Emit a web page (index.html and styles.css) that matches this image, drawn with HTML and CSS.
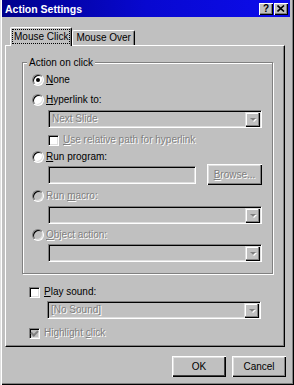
FILE: index.html
```html
<!DOCTYPE html>
<html lang="en">
<head>
    <meta charset="UTF-8">
    <title>Action Settings</title>
    <link rel="stylesheet" href="styles.css">
</head>
<body>

    <div class="window">
        <div class="titlebar">
            <span class="title">Action Settings</span>
            <div class="caption-btns">
                <span class="cbtn">?</span>
                <span class="cbtn">
                    <svg width="8" height="7" viewBox="0 0 8 7"><path d="M0.5 0.5 L7 6.5 M7 0.5 L0.5 6.5" stroke="#000" stroke-width="1.6"/></svg>
                </span>
            </div>
        </div>

        <div class="content">
            <div class="tabs">
                <div class="tab active"><span class="focus">Mouse Click</span></div>
                <div class="tab">Mouse Over</div>
            </div>

            <div class="panel">
                <div class="group">
                    <div class="legend">Action on click</div>

                    <div class="row r-none"><span class="radio checked"></span><span><u>N</u>one</span></div>
                    <div class="row r-gap4"><span class="radio"></span><span><u>H</u>yperlink to:</span></div>
                    <div class="field select sel-1 indent"><span class="val dis">Next Slide</span><span class="arrow"></span></div>
                    <div class="row r-check indent"><span class="check"></span><span class="dis"><u>U</u>se relative path for hyperlink</span></div>
                    <div class="row r-gap1"><span class="radio"></span><span><u>R</u>un program:</span></div>
                    <div class="input-row indent">
                        <div class="field text-input"></div>
                        <div class="btn browse dis"><span><u>B</u>rowse...</span></div>
                    </div>
                    <div class="row r-gap3"><span class="radio off"></span><span class="dis">Run <u>m</u>acro:</span></div>
                    <div class="field select sel-2 indent"><span class="val"></span><span class="arrow"></span></div>
                    <div class="row r-gap3"><span class="radio off"></span><span class="dis"><u>O</u>bject action:</span></div>
                    <div class="field select sel-3 indent"><span class="val"></span><span class="arrow"></span></div>
                </div>

                <div class="row r-sound"><span class="check"></span><span><u>P</u>lay sound:</span></div>
                <div class="field select sel-sound"><span class="val dis">[No Sound]</span><span class="arrow"></span></div>
                <div class="row r-highlight"><span class="check checked off"></span><span class="dis">Highlight <u>c</u>lick</span></div>
            </div>

            <div class="buttons">
                <div class="btn ok">OK</div>
                <div class="btn">Cancel</div>
            </div>
        </div>
    </div>

</body>
</html>
```

FILE: styles.css
```css
* {
    margin: 0;
    padding: 0;
    box-sizing: border-box;
}

body {
    background: #c0c0c0;
    font-family: "Liberation Sans", Arial, sans-serif;
    font-size: 10px;
    color: #000;
}

.window {
    width: 294px;
    height: 385px;
    padding: 0 4px 0 2px;
    background: #c0c0c0;
    box-shadow: inset 1px 0 #dfdfdf, inset 2px 0 #fff, inset -1px -1px #000, inset -2px -2px #808080;
}

/* title bar */
.titlebar {
    height: 17px;
    display: flex;
    align-items: center;
    justify-content: space-between;
    padding: 0 2px 0 3px;
    background: linear-gradient(to right, #00008c, #0808d0 50%, #0c0cec);
}
.title {
    color: #fff;
    font-weight: bold;
    font-size: 10.5px;
}
.caption-btns {
    display: flex;
    gap: 1px;
}
.cbtn {
    width: 14px;
    height: 12px;
    display: flex;
    align-items: center;
    justify-content: center;
    background: #c0c0c0;
    font-weight: bold;
    font-size: 10px;
    line-height: 1;
    box-shadow: inset 1px 1px #fff, inset -1px -1px #000, inset -2px -2px #808080;
}

.content {
    padding-left: 3px;
}

/* tabs */
.tabs {
    display: flex;
    align-items: flex-end;
    height: 18px;
    margin-top: 10px;
    padding-left: 5px;
}
.tab {
    height: 15px;
    padding: 0 3px;
    line-height: 14px;
    white-space: nowrap;
    border-top: 1px solid #fff;
    border-left: 1px solid #fff;
    border-right: 1px solid #000;
    border-radius: 2px 2px 0 0;
    box-shadow: inset -1px 0 #808080;
}
.tab.active {
    position: relative;
    z-index: 1;
    height: 19px;
    margin-bottom: -1px;
    padding: 2px 2px 0 2px;
    background: #c0c0c0;
}
.focus {
    display: block;
    padding: 0 1px;
    line-height: 13px;
    outline: 1px dotted #000;
}

/* tab page */
.panel {
    width: 280px;
    height: 302px;
    border-top: 1px solid #fff;
    border-left: 1px solid #fff;
    border-right: 1px solid #000;
    border-bottom: 1px solid #000;
    box-shadow: inset -1px -1px #808080;
}

.group {
    position: relative;
    width: 251px;
    height: 212px;
    margin: 16px 0 0 16px;
    padding: 9px 0 0 9px;
    border: 1px solid #808080;
    box-shadow: 1px 1px 0 #fff, inset 1px 1px 0 #fff;
}
.legend {
    position: absolute;
    top: -7px;
    left: 4px;
    padding: 0 2px;
    line-height: 13px;
    background: #c0c0c0;
}

.row {
    display: flex;
    align-items: center;
    height: 16px;
    line-height: 16px;
}
.indent {
    margin-left: 16px;
}
.r-gap4 { margin-top: 4px; }
.r-gap3 { margin-top: 3px; }
.r-gap1 { margin-top: 1px; }
.r-check { margin-top: 4px; }

.dis {
    color: #808080;
    text-shadow: 1px 1px 0 #fff;
}

/* radio & checkbox */
.radio {
    width: 12px;
    height: 12px;
    margin-right: 2px;
    border-radius: 50%;
    border: 1px solid;
    border-color: #808080 #fff #fff #808080;
    background: #fff;
    box-shadow: inset 1px 1px #000, inset -1px -1px #dfdfdf;
    display: flex;
    align-items: center;
    justify-content: center;
}
.radio.off {
    background: #c0c0c0;
}
.radio.checked::after {
    content: "";
    width: 4px;
    height: 4px;
    border-radius: 50%;
    background: #000;
}
.check {
    width: 11px;
    height: 11px;
    margin-right: 4px;
    border: 1px solid;
    border-color: #808080 #fff #fff #808080;
    background: #fff;
    box-shadow: inset 1px 1px #000, inset -1px -1px #dfdfdf;
    display: flex;
    align-items: center;
    justify-content: center;
}
.check.off {
    background: #c0c0c0;
}
.check.checked::after {
    content: "";
    width: 5px;
    height: 3px;
    margin-top: -2px;
    border-left: 2px solid #808080;
    border-bottom: 2px solid #808080;
    transform: rotate(-45deg);
}

/* sunken fields */
.field {
    height: 18px;
    background: #c0c0c0;
    border: 1px solid;
    border-color: #808080 #fff #fff #808080;
    box-shadow: inset 1px 1px #000, inset -1px -1px #dfdfdf;
}
.select {
    width: 214px;
    display: flex;
    align-items: center;
    padding: 1px 1px 1px 3px;
}
.select .val {
    flex: 1;
    line-height: 14px;
}
.arrow {
    width: 15px;
    height: 15px;
    display: flex;
    align-items: center;
    justify-content: center;
    background: #c0c0c0;
    box-shadow: inset 1px 1px #dfdfdf, inset -1px -1px #000, inset -2px -2px #808080, inset 2px 2px #fff;
}
.arrow::after {
    content: "";
    border-left: 3px solid transparent;
    border-right: 3px solid transparent;
    border-top: 3px solid #808080;
    filter: drop-shadow(1px 1px 0 #fff);
}
.sel-1 { margin-top: 2px; }
.sel-2 { margin-top: 2px; }
.sel-3 { margin-top: 1px; }

.input-row {
    display: flex;
    align-items: center;
    height: 21px;
    margin-top: -1px;
}
.text-input {
    width: 148px;
}

/* buttons */
.btn {
    display: flex;
    align-items: center;
    justify-content: center;
    height: 21px;
    width: 54px;
    background: #c0c0c0;
    box-shadow: inset 1px 1px #fff, inset -1px -1px #000, inset -2px -2px #808080, inset 2px 2px #dfdfdf;
}
.browse {
    width: 55px;
    margin-left: 11px;
}

.r-sound {
    margin: 10px 0 0 23px;
}
.sel-sound {
    margin: 1px 0 0 41px;
}
.r-highlight {
    margin: 6px 0 0 23px;
}

.buttons {
    display: flex;
    justify-content: flex-end;
    gap: 6px;
    margin: 9px 4px 0 0;
}
.btn.ok {
    box-shadow: inset 1px 1px #fff, inset -1px -1px #000, inset -2px -2px #404040, inset 2px 2px #dfdfdf;
}
```
